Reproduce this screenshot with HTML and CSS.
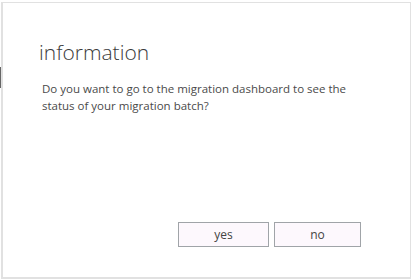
FILE: index.html
```html
<!DOCTYPE html>
<html>
<head>
<meta charset="utf-8">
<link rel="stylesheet" href="styles.css">
</head>
<body>
<div class="backdrop-mark"></div>
<div class="dialog">
  <h1 class="title">information</h1>
  <p class="message">Do you want to go to the migration dashboard to see the status of your migration batch?</p>
  <div class="actions">
    <button class="btn btn-yes">yes</button>
    <button class="btn btn-no">no</button>
  </div>
</div>
</body>
</html>
```
FILE: styles.css
```css
html, body {
  margin: 0;
  padding: 0;
  background: #ffffff;
  width: 411px;
  height: 279px;
  overflow: hidden;
}
body {
  position: relative;
  font-family: "Open Sans", "Noto Sans", sans-serif;
}
.backdrop-mark {
  position: absolute;
  left: 0;
  top: 67px;
  width: 1px;
  height: 21px;
  background: #666666;
}
.dialog {
  box-sizing: border-box;
  margin: 2px 0 0 1px;
  width: 410px;
  height: 277px;
  border: 2px solid #e1e1e1;
  border-top-width: 1px;
  border-right-width: 1px;
  background: #ffffff;
  display: flex;
  flex-direction: column;
  padding: 0 49px 30px 39px;
}
.title {
  margin: 35px 0 0 -3px;
  font-size: 21px;
  font-weight: 300;
  color: #3a3a3a;
  line-height: 28px;
}
.message {
  margin: 14px 0 0 0;
  font-size: 11.5px;
  line-height: 17px;
  color: #4a4a4a;
}
.actions {
  margin-top: auto;
  display: flex;
  justify-content: flex-end;
  gap: 5px;
}
.btn {
  box-sizing: border-box;
  height: 25px;
  border: 1px solid #a0a4a8;
  background: #fdf8fd;
  font-family: "Open Sans", "Noto Sans", sans-serif;
  font-size: 12px;
  color: #444444;
  padding: 0;
}
.btn-yes { width: 91px; }
.btn-no { width: 87px; }
```
